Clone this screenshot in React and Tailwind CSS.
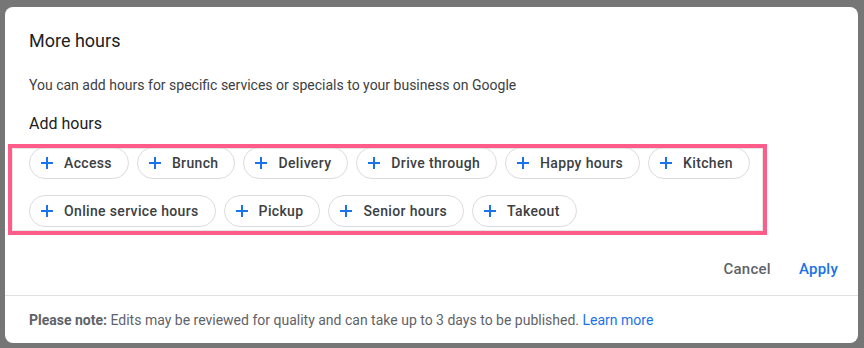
import React from "react";

const rowOne = ["Access", "Brunch", "Delivery", "Drive through", "Happy hours", "Kitchen"];
const rowTwo = ["Online service hours", "Pickup", "Senior hours", "Takeout"];

function PlusIcon() {
  return (
    <svg width="18" height="18" viewBox="0 0 18 18" className="shrink-0">
      <path d="M9 3v12M3 9h12" stroke="#1a73e8" strokeWidth="2" fill="none" />
    </svg>
  );
}

function Chip({ label }) {
  return (
    <button className="flex items-center h-8 pl-2 pr-4 gap-2 rounded-full border border-[#dadce0] bg-white text-sm font-medium tracking-[0.35px] text-[#3c4043]">
      <PlusIcon />
      <span>{label}</span>
    </button>
  );
}

export default function App() {
  return (
    <div
      className="w-[864px] h-[348px] bg-[#767676] pl-[5px] pt-[7px] overflow-hidden"
      style={{ fontFamily: "Roboto, 'Liberation Sans', sans-serif" }}
    >
      <div className="relative w-[853px] h-[336px] bg-white rounded-lg flex flex-col">
        <div className="px-6 pt-[22px]">
          <h2 className="text-lg leading-6 text-[#202124]">More hours</h2>
          <p className="mt-[22px] text-sm leading-5 text-[#3c4043]">
            You can add hours for specific services or specials to your business on Google
          </p>
          <h3 className="mt-[17px] text-base leading-6 text-[#202124]">Add hours</h3>
          <div className="mt-[11px] w-[740px] flex flex-wrap gap-x-2 gap-y-4">
            {rowOne.map((c) => (
              <Chip key={c} label={c} />
            ))}
            {rowTwo.map((c) => (
              <Chip key={c} label={c} />
            ))}
          </div>
        </div>

        {/* highlight annotation */}
        <div className="absolute left-[3px] top-[137px] w-[759px] h-[91px] border-4 border-[#ff5c8a] pointer-events-none">
          <div className="w-full h-full border border-[#d6d6d6]/60" />
        </div>

        <div className="mt-auto flex justify-end gap-[12px] pr-3 pb-2">
          <button className="h-9 px-2 text-[15px] font-medium tracking-[0.25px] text-[#5f6368]">Cancel</button>
          <button className="h-9 px-2 text-[15px] font-medium tracking-[0.25px] text-[#1a73e8]">Apply</button>
        </div>
        <div className="border-t border-[#e0e0e0] px-6 pt-[14px] pb-[13px] text-sm leading-5 text-[#5f6368]">
          <span className="font-bold">Please note:</span> Edits may be reviewed for quality and can take up to 3 days to be published.{" "}
          <span className="text-[#1a73e8]">Learn more</span>
        </div>
      </div>
    </div>
  );
}
